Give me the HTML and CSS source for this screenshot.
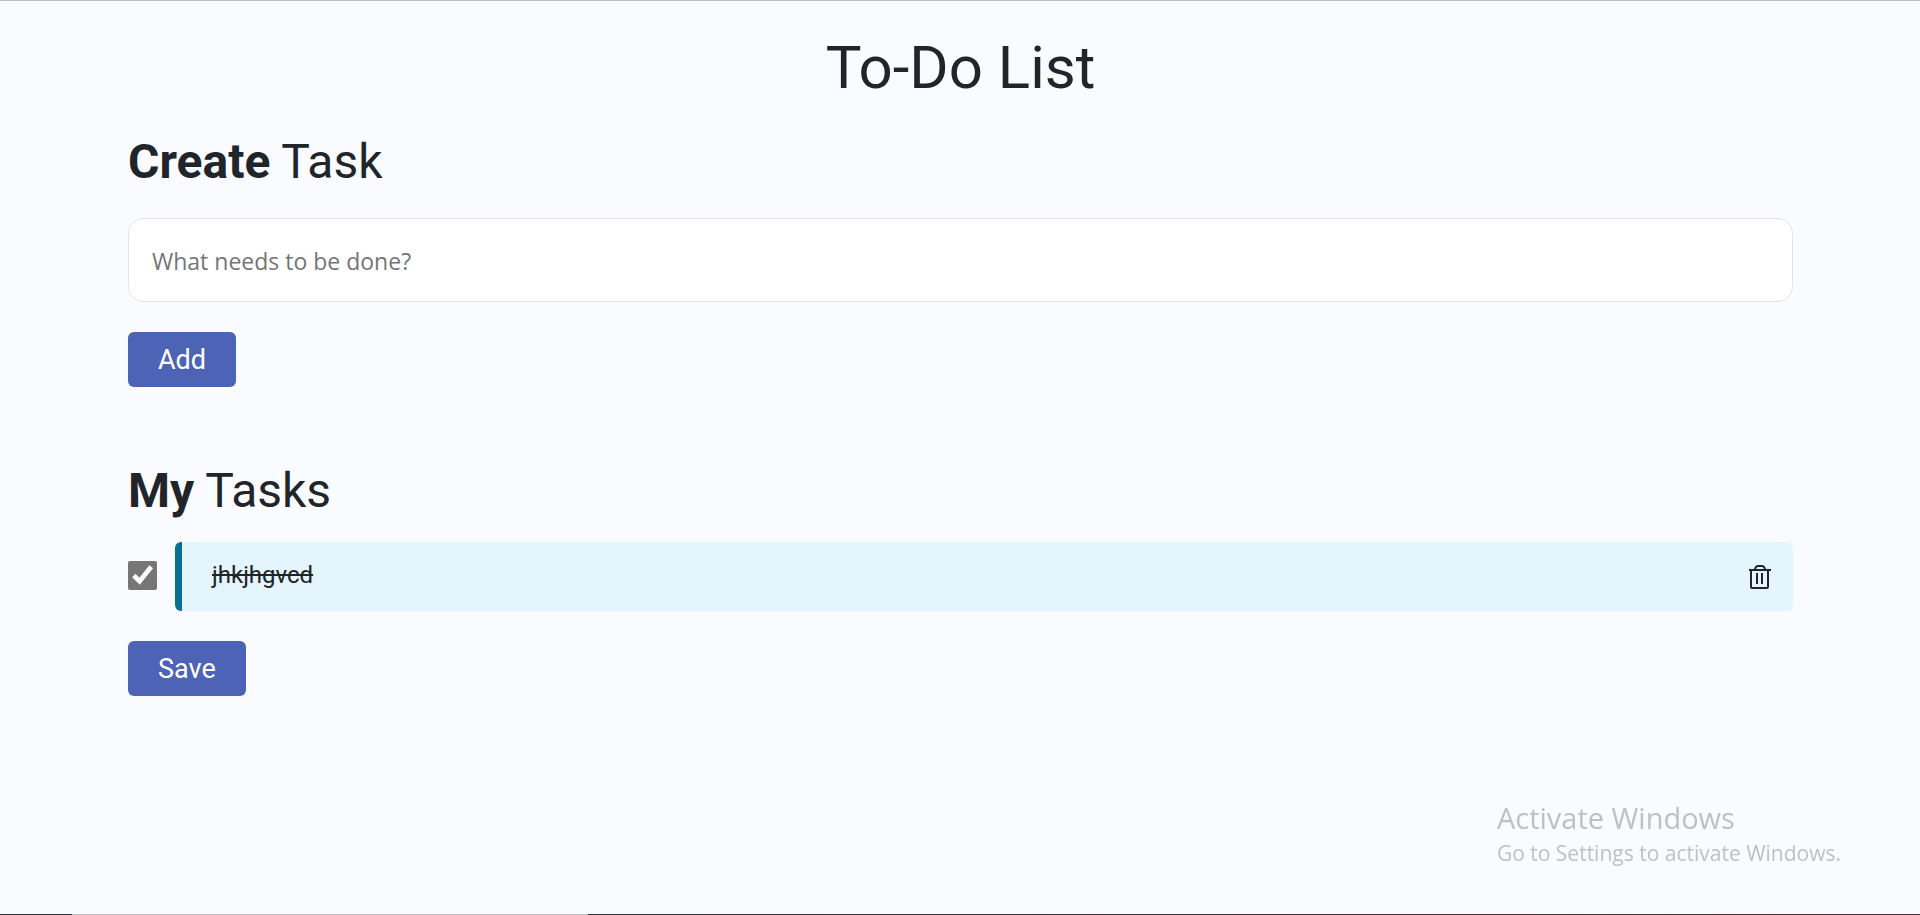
FILE: index.html
```html
<!DOCTYPE html>
<html lang="en">
<head>
<meta charset="utf-8">
<title>To-Do List</title>
<link rel="stylesheet" href="styles.css">
</head>
<body>
<main class="page">
  <h1 class="title">To-Do List</h1>
  <form class="create">
    <h2 class="heading"><label for="task-input"><strong>Create</strong> Task</label></h2>
    <input class="task-input" id="task-input" type="text" placeholder="What needs to be done?">
    <button class="button" type="button">Add</button>
  </form>
  <section class="tasks">
    <h2 class="heading"><strong>My</strong> Tasks</h2>
    <ul class="task-list">
      <li class="task-row">
        <input class="check" id="task-1" type="checkbox" checked>
        <div class="task">
          <label class="task-name" for="task-1">jhkjhgvcd</label>
          <button class="delete" type="button" aria-label="Delete task">
            <svg class="trash" viewBox="0 0 22 26" fill="none" stroke="currentColor" stroke-width="2">
              <path d="M0 6H22M6 6V5Q7 2 9 2H13Q15 2 16 5V6"/>
              <path d="M2 6V23Q2 24 3 24H18Q19 24 19 23V6M8 9V20M13 9V20"/>
            </svg>
          </button>
        </div>
      </li>
    </ul>
    <button class="button" type="button">Save</button>
  </section>
</main>
<aside class="notice">
  <p class="notice-title">Activate Windows</p>
  <p class="notice-text">Go to Settings to activate Windows.</p>
</aside>
<div class="taskbar-edge"></div>
</body>
</html>
```
FILE: styles.css
```css
* {
  box-sizing: border-box;
}

body {
  margin: 0;
  min-height: 100vh;
  border-top: 1px solid #bfbfbf;
  background: #fafbff;
  color: #212529;
  font-family: Roboto, "Liberation Sans", sans-serif;
}

.page {
  padding: 31px 127px 0 128px;
}

.title {
  margin: 0;
  font-size: 60px;
  font-weight: 400;
  line-height: 72px;
  text-align: center;
}

.create {
  padding-top: 28px;
}

.tasks {
  padding-top: 74px;
}

.heading {
  margin: 0;
  font-size: 48px;
  font-weight: 400;
  line-height: 60px;
}

.heading strong {
  font-weight: 700;
}

.task-input {
  display: block;
  width: 100%;
  height: 84px;
  margin: 26px 0 30px;
  padding: 2px 23px 0 23px;
  border: 1px solid #e2e4e9;
  border-radius: 15px;
  background: #fff;
  color: inherit;
  font-family: "Open Sans", "Noto Sans", sans-serif;
  font-size: 23px;
}

.task-input::placeholder {
  color: #757575;
  opacity: 1;
}

.button {
  display: block;
  height: 55px;
  padding: 0 30px;
  border: 0;
  border-radius: 6px;
  background: #4d63b6;
  color: #fff;
  font-family: inherit;
  font-size: 27px;
}

.task-list {
  margin: 21px 0 30px;
  padding: 0;
  list-style: none;
}

.task-row {
  display: flex;
  align-items: center;
  gap: 18px;
}

.check {
  flex: none;
  width: 29px;
  height: 29px;
  margin: 0 0 3px;
  accent-color: #767676;
}

.task {
  display: flex;
  flex: 1;
  align-items: center;
  justify-content: space-between;
  height: 69px;
  padding: 0 22px 0 30px;
  border-left: 7px solid #087094;
  border-radius: 6px;
  background: #e4f5fe;
}

.task-name {
  padding-bottom: 4px;
  font-size: 24px;
  text-decoration: line-through;
}

.delete {
  padding: 0;
  border: 0;
  background: none;
  color: #212529;
}

.trash {
  display: block;
  width: 22px;
  height: 26px;
}

.notice {
  position: fixed;
  right: 79px;
  bottom: 48px;
  color: #c0c0c0;
  font-family: "Open Sans", "Noto Sans", sans-serif;
}

.notice p {
  margin: 0;
}

.notice-title {
  font-size: 29px;
  line-height: 42px;
}

.notice-text {
  font-size: 21px;
  line-height: 28px;
}

.taskbar-edge {
  position: fixed;
  right: 0;
  bottom: 0;
  left: 0;
  height: 1px;
  background: linear-gradient(to right, #2f2f3f 72px, #c0c0c0 72px 588px, #2f2f3f 588px, #3a3038 1200px, #5a2a32 1600px, #4a3038);
}
```
